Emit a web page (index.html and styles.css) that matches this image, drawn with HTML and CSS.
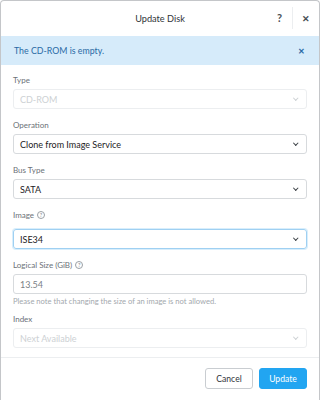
FILE: index.html
```html
<!DOCTYPE html>
<html lang="en">
<head>
    <meta charset="UTF-8">
    <title>Update Disk</title>
    <link rel="stylesheet" href="styles.css">
</head>
<body>
    <div class="modal">
        <div class="modal-header">
            <h2>Update Disk</h2>
            <div class="header-actions">
                <span class="help">?</span>
                <span class="close">&#x2715;</span>
            </div>
        </div>

        <div class="alert">
            <span>The CD-ROM is empty.</span>
            <span class="alert-close">&#x2715;</span>
        </div>

        <form class="form">
            <div class="field">
                <label>Type</label>
                <div class="select disabled">CD-ROM<span class="caret"></span></div>
            </div>
            <div class="field">
                <label>Operation</label>
                <div class="select">Clone from Image Service<span class="caret"></span></div>
            </div>
            <div class="field">
                <label>Bus Type</label>
                <div class="select">SATA<span class="caret"></span></div>
            </div>
            <div class="field">
                <label class="tall">Image <span class="qmark">?</span></label>
                <div class="select focused">ISE34<span class="caret"></span></div>
            </div>
            <div class="field with-note">
                <label>Logical Size (GiB) <span class="qmark">?</span></label>
                <div class="input">13.54</div>
                <p class="note">Please note that changing the size of an image is not allowed.</p>
            </div>
            <div class="field">
                <label>Index</label>
                <div class="select disabled">Next Available<span class="caret"></span></div>
            </div>
        </form>

        <div class="modal-footer">
            <button type="button" class="btn-cancel">Cancel</button>
            <button type="button" class="btn-update">Update</button>
        </div>
    </div>
</body>
</html>
```

FILE: styles.css
```css
* {
    margin: 0;
    padding: 0;
    box-sizing: border-box;
    font-family: 'Lato', 'Open Sans', sans-serif;
}

body {
    background: #fff;
    width: 320px;
    height: 400px;
    overflow: hidden;
}

.modal {
    background: #fff;
    border: 1px solid #c4c6c9;
    border-bottom: none;
    border-radius: 4px 4px 0 0;
    height: 400px;
}

.modal-header {
    height: 35px;
    display: flex;
    align-items: center;
    justify-content: center;
    position: relative;
}

.modal-header h2 {
    font-size: 9.2px;
    font-weight: 400;
    color: #2f3438;
}

.header-actions {
    position: absolute;
    right: 0;
    top: 6px;
    display: flex;
    align-items: center;
    height: 22px;
}

.help {
    font-size: 11px;
    font-weight: 700;
    color: #4a4f55;
    width: 26px;
    text-align: center;
    border-right: 1px solid #eceef0;
    line-height: 22px;
}

.close {
    font-size: 9px;
    font-weight: 700;
    color: #4a4f55;
    width: 26px;
    text-align: center;
}

.alert {
    background: #d6ebfa;
    height: 29px;
    display: flex;
    align-items: center;
    justify-content: space-between;
    padding: 0 14px 0 13px;
    font-size: 8.8px;
    color: #2a6aa5;
}

.alert-close {
    font-size: 8px;
    font-weight: 700;
    color: #2a6aa5;
}

.form {
    padding: 8px 12px 0 12px;
}

.field {
    margin-bottom: 9px;
}

.field.with-note {
    margin-bottom: 6px;
}

.field label {
    display: flex;
    align-items: center;
    gap: 3px;
    font-size: 8px;
    color: #6b7177;
    height: 14px;
    margin-bottom: 2px;
}

.field label.tall {
    margin-bottom: 7px;
}

.qmark {
    display: inline-flex;
    align-items: center;
    justify-content: center;
    width: 8px;
    height: 8px;
    border: 1px solid #9aa0a6;
    border-radius: 50%;
    font-size: 5.5px;
    color: #7a8086;
}

.select,
.input {
    height: 20px;
    border: 1px solid #d7dadd;
    border-radius: 3px;
    display: flex;
    align-items: center;
    justify-content: space-between;
    padding: 0 9px 0 6px;
    font-size: 9px;
    color: #1d2125;
}

.select.disabled {
    border-color: #eceef0;
    color: #cdd1d4;
}

.select.focused {
    border-color: #9fd0f2;
    box-shadow: 0 0 0 1px #d8eefc;
}

.input {
    color: #7b8186;
}

.caret {
    width: 3.5px;
    height: 3.5px;
    border-right: 1.3px solid #3a3f44;
    border-bottom: 1.3px solid #3a3f44;
    transform: rotate(45deg);
    margin-top: -2px;
}

.disabled .caret {
    border-color: #cdd1d4;
}

.note {
    font-size: 7.6px;
    color: #a3a8ad;
    height: 10px;
    line-height: 10px;
    margin-top: 2px;
}

.modal-footer {
    border-top: 1px solid #eceef0;
    margin-top: 3px;
    padding: 10px 12px;
    display: flex;
    justify-content: flex-end;
    gap: 6px;
}

.modal-footer button {
    height: 21px;
    width: 48px;
    border-radius: 3px;
    font-size: 8.6px;
    cursor: pointer;
}

.btn-cancel {
    background: #fff;
    border: 1px solid #c9cdd1;
    color: #2f3438;
}

.btn-update {
    background: #22a5f1;
    border: 1px solid #22a5f1;
    color: #fff;
}
```
